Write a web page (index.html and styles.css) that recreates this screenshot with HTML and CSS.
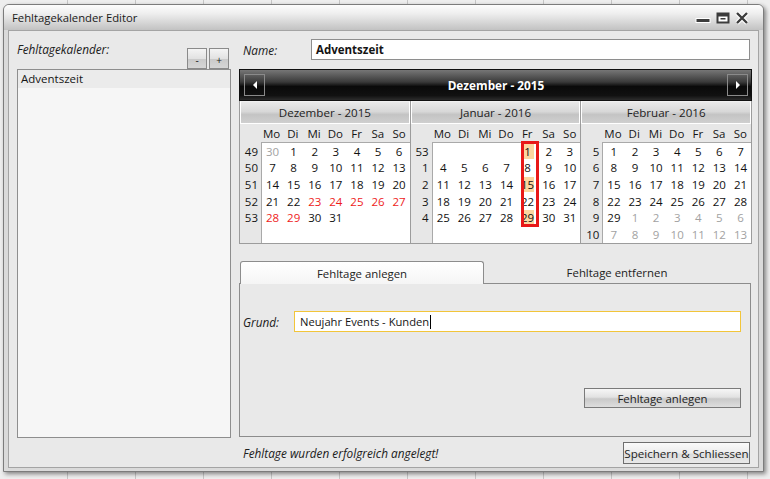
FILE: index.html
```html
<!DOCTYPE html>
<html lang="de">
<head>
<meta charset="utf-8">
<title>Fehltagekalender Editor</title>
<link rel="stylesheet" href="styles.css">
</head>
<body>
<div class="window">
  <div class="titlebar">
    <span class="title">Fehltagekalender Editor</span>
    <div class="controls">
      <span class="ctl ctl-min"><svg width="18" height="14" viewBox="0 0 18 14"><rect x="2" y="7.5" width="14" height="4" fill="#3c3c3c" stroke="#ffffff" stroke-width="1"/></svg></span>
      <span class="ctl"><svg width="14" height="14" viewBox="0 0 14 14"><rect x="1.5" y="2.5" width="11" height="9" fill="#ffffff" stroke="#3c3c3c" stroke-width="2"/><rect x="2" y="3" width="10" height="2.5" fill="#3c3c3c"/><rect x="4.5" y="7" width="5" height="1.5" fill="#3c3c3c"/></svg></span>
      <span class="ctl"><svg width="16" height="14" viewBox="0 0 16 14"><path d="M3 2 L13 12 M13 2 L3 12" stroke="#ffffff" stroke-width="4.5"/><path d="M3 2 L13 12 M13 2 L3 12" stroke="#3c3c3c" stroke-width="2.4"/></svg></span>
    </div>
  </div>
  <div class="client">
    <div class="left">
      <div class="left-head">
        <span class="label">Fehltagekalender:</span>
        <div class="pm">
          <button class="small-btn">-</button>
          <button class="small-btn">+</button>
        </div>
      </div>
      <div class="list">
        <div class="list-item">Adventszeit</div>
      </div>
    </div>
    <div class="right">
      <div class="name-row">
        <span class="label name-label">Name:</span>
        <div class="name-input">Adventszeit</div>
      </div>
      <div class="calendar">
        <div class="cal-head">
          <span class="nav"><svg width="6" height="8" viewBox="0 0 6 8"><path d="M5 0 L1 4 L5 8 Z" fill="#ffffff"/></svg></span>
          <span class="cal-title">Dezember - 2015</span>
          <span class="nav"><svg width="6" height="8" viewBox="0 0 6 8"><path d="M1 0 L5 4 L1 8 Z" fill="#ffffff"/></svg></span>
        </div>
        <div class="months">
          <div class="month">
            <div class="month-head">Dezember - 2015</div>
            <div class="month-body">
              <div class="corner"></div>
              <div class="dow"><span>Mo</span><span>Di</span><span>Mi</span><span>Do</span><span>Fr</span><span>Sa</span><span>So</span></div>
              <div class="weeks"><span>49</span><span>50</span><span>51</span><span>52</span><span>53</span><span></span></div>
              <div class="days">
                <span class="other">30</span><span>1</span><span>2</span><span>3</span><span>4</span><span>5</span><span>6</span>
                <span>7</span><span>8</span><span>9</span><span>10</span><span>11</span><span>12</span><span>13</span>
                <span>14</span><span>15</span><span>16</span><span>17</span><span>18</span><span>19</span><span>20</span>
                <span>21</span><span>22</span><span class="red">23</span><span class="red">24</span><span class="red">25</span><span class="red">26</span><span class="red">27</span>
                <span class="red">28</span><span class="red">29</span><span>30</span><span>31</span><span></span><span></span><span></span>
              </div>
            </div>
          </div>
          <div class="month">
            <div class="month-head">Januar - 2016</div>
            <div class="month-body">
              <div class="corner"></div>
              <div class="dow"><span>Mo</span><span>Di</span><span>Mi</span><span>Do</span><span>Fr</span><span>Sa</span><span>So</span></div>
              <div class="weeks"><span>53</span><span>1</span><span>2</span><span>3</span><span>4</span><span></span></div>
              <div class="days">
                <span></span><span></span><span></span><span></span><span class="sel">1</span><span>2</span><span>3</span>
                <span>4</span><span>5</span><span>6</span><span>7</span><span>8</span><span>9</span><span>10</span>
                <span>11</span><span>12</span><span>13</span><span>14</span><span class="sel">15</span><span>16</span><span>17</span>
                <span>18</span><span>19</span><span>20</span><span>21</span><span>22</span><span>23</span><span>24</span>
                <span>25</span><span>26</span><span>27</span><span>28</span><span class="sel">29</span><span>30</span><span>31</span>
                <div class="mark"></div>
              </div>
            </div>
          </div>
          <div class="month">
            <div class="month-head">Februar - 2016</div>
            <div class="month-body">
              <div class="corner"></div>
              <div class="dow"><span>Mo</span><span>Di</span><span>Mi</span><span>Do</span><span>Fr</span><span>Sa</span><span>So</span></div>
              <div class="weeks"><span>5</span><span>6</span><span>7</span><span>8</span><span>9</span><span>10</span></div>
              <div class="days">
                <span>1</span><span>2</span><span>3</span><span>4</span><span>5</span><span>6</span><span>7</span>
                <span>8</span><span>9</span><span>10</span><span>11</span><span>12</span><span>13</span><span>14</span>
                <span>15</span><span>16</span><span>17</span><span>18</span><span>19</span><span>20</span><span>21</span>
                <span>22</span><span>23</span><span>24</span><span>25</span><span>26</span><span>27</span><span>28</span>
                <span>29</span><span class="other">1</span><span class="other">2</span><span class="other">3</span><span class="other">4</span><span class="other">5</span><span class="other">6</span>
                <span class="other">7</span><span class="other">8</span><span class="other">9</span><span class="other">10</span><span class="other">11</span><span class="other">12</span><span class="other">13</span>
              </div>
            </div>
          </div>
        </div>
      </div>
      <div class="tabs">
        <div class="tab-strip">
          <div class="tab active">Fehltage anlegen</div>
          <div class="tab">Fehltage entfernen</div>
        </div>
        <div class="tab-panel">
          <div class="grund-row">
            <span class="label grund-label">Grund:</span>
            <div class="grund-input">Neujahr Events - Kunden<span class="caret"></span></div>
          </div>
          <div class="action-row">
            <button class="btn btn-add">Fehltage anlegen</button>
          </div>
        </div>
      </div>
      <div class="bottom-row">
        <span class="label status">Fehltage wurden erfolgreich angelegt!</span>
        <button class="btn btn-save">Speichern &amp; Schliessen</button>
      </div>
    </div>
  </div>
</div>
</body>
</html>
```
FILE: styles.css
```css
* { box-sizing: border-box; }
html, body { margin: 0; padding: 0; }
body {
  width: 770px;
  height: 479px;
  overflow: hidden;
  font-family: "Open Sans", "Noto Sans", sans-serif;
  font-size: 11.5px;
  color: #151515;
  background: #eeeeee repeating-linear-gradient(90deg, transparent 0 67px, #c6c6c6 67px 68px);
}
.window {
  margin: 4px 0 0 3px;
  width: 761px;
  height: 468px;
  border: 1px solid #7c7c7c;
  border-radius: 6px 6px 0 0;
  background: #dadada;
  box-shadow: 2px 2px 4px rgba(0, 0, 0, 0.45);
  display: flex;
  flex-direction: column;
}
.titlebar {
  height: 25px;
  flex: none;
  display: flex;
  align-items: center;
  padding-left: 8px;
  padding-right: 13px;
  background: linear-gradient(#fdfdfd, #eeeeee 35%, #c2c2c2);
  border-radius: 5px 5px 0 0;
}
.title { font-size: 11.3px; color: #1a1a1a; }
.controls { margin-left: auto; display: flex; align-items: center; gap: 4px; }
.ctl { display: flex; }
.ctl svg { display: block; }

.client {
  flex: 1;
  margin: 0 4px 3px 4px;
  border: 1px solid #a4a4a4;
  background: #e9e9e9;
  padding: 8px 5px 0 8px;
  display: flex;
  gap: 8px;
}
.label { font-style: italic; color: #202020; font-size: 11.8px; }

.left { width: 214px; display: flex; flex-direction: column; }
.left-head { height: 30px; display: flex; align-items: flex-start; }
.left-head .label { padding-top: 2px; }
.pm { margin-left: auto; margin-right: 2px; margin-top: 9px; display: flex; gap: 2px; }
.small-btn {
  width: 20px;
  height: 21px;
  padding: 0;
  border: 1px solid #8a8a8a;
  background: linear-gradient(#f4f4f4, #e2e2e2 50%, #cacaca 55%, #d6d6d6);
  font-family: inherit;
  font-size: 10px;
  color: #222;
  line-height: 16px;
  padding-top: 3px;
}
.list { height: 369px; border: 1px solid #8e8e8e; background: #f6f6f6; }
.list-item { height: 18px; line-height: 18px; padding-left: 3px; background: #ebebeb; font-size: 11.5px; }

.right { width: 513px; display: flex; flex-direction: column; }
.name-row { height: 21px; display: flex; align-items: center; }
.name-label { width: 72px; padding-left: 4px; }
.name-input {
  width: 439px;
  height: 21px;
  border: 1px solid #8e8e8e;
  background: #ffffff;
  font-weight: bold;
  font-size: 11.5px;
  line-height: 19px;
  padding-left: 4px;
}

.calendar { margin-top: 9px; }
.cal-head {
  height: 32px;
  border: 1px solid #101010;
  background: linear-gradient(#767676, #3a3a3a 40%, #0a0a0a 55%, #111111 85%, #2c2c2c);
  display: flex;
  align-items: center;
  justify-content: space-between;
  padding: 0 3px 0 4px;
}
.nav {
  width: 21px;
  height: 22px;
  border: 1px solid #8a8a8a;
  display: flex;
  align-items: center;
  justify-content: center;
}
.cal-title { color: #ffffff; font-weight: bold; font-size: 11.8px; }
.months { height: 143px; display: flex; border: 1px solid #9c9c9c; border-top: none; }
.month { flex: 1; display: flex; flex-direction: column; }
.month + .month { border-left: 1px solid #9c9c9c; }
.month-head {
  height: 23px;
  display: flex;
  align-items: center;
  justify-content: center;
  border: 1px solid #ffffff;
  border-top-color: #f0f0f0;
  background: linear-gradient(#e9e9e9, #d8d8d8 45%, #c4c4c4 60%, #cfcfcf);
  color: #222;
  font-size: 11.6px;
}
.month-body {
  flex: 1;
  display: grid;
  grid-template-columns: 21px 1fr;
  grid-template-rows: 18px 1fr;
  background: #e7e7e7;
}
.dow { display: grid; grid-template-columns: repeat(7, 1fr); align-items: center; text-align: center; }
.weeks {
  display: grid;
  grid-template-rows: repeat(6, 16.66px);
  padding-top: 1px;
  text-align: right;
  padding-right: 3px;
  align-items: center;
}
.days {
  position: relative;
  background: #ffffff;
  border-left: 1px solid #a9a9a9;
  border-top: 1px solid #a9a9a9;
  display: grid;
  grid-template-columns: repeat(7, 1fr);
  grid-template-rows: repeat(6, 16.66px);
  align-items: center;
  text-align: center;
  color: #111111;
}
.days span { line-height: 15px; }
.days .other { color: #a2a2a2; }
.days .red { color: #ee1c1c; }
.days .sel { background: #fbd6a0; margin: 0 4px; }
.mark {
  position: absolute;
  left: 88px;
  top: -2px;
  width: 18px;
  height: 86px;
  border: 3px solid #e81818;
}

.tabs { margin-top: 17px; }
.tab-strip { height: 22px; display: flex; padding-left: 1px; }
.tab {
  width: 244px;
  height: 22px;
  display: flex;
  align-items: center;
  justify-content: center;
  color: #222;
  font-size: 11.4px;
}
.tab + .tab { flex: 1; padding-right: 2px; }
.tab.active {
  border: 1px solid #8c8c8c;
  border-bottom: none;
  border-radius: 3px 3px 0 0;
  background: linear-gradient(#ffffff, #f5f5f5);
  position: relative;
  z-index: 1;
  height: 23px;
}
.tab-panel {
  height: 154px;
  width: 512px;
  border: 1px solid #8c8c8c;
  padding: 27px 9px 0 3px;
}
.grund-row { display: flex; align-items: center; height: 21px; }
.grund-label { width: 51px; }
.grund-input {
  width: 447px;
  height: 21px;
  border: 1px solid #f2c53a;
  background: #ffffff;
  padding-left: 5px;
  line-height: 19px;
  font-size: 11.2px;
  display: flex;
  align-items: center;
}
.caret { display: inline-block; width: 1px; height: 14px; background: #000; margin-left: 1px; }
.action-row { display: flex; justify-content: flex-end; margin-top: 56px; }
.btn {
  font-family: inherit;
  font-size: 11.4px;
  color: #1e1e1e;
  border: 1px solid #7a7a7a;
  background: linear-gradient(#f6f6f6, #e2e2e2 45%, #c9c9c9 55%, #dedede);
  padding: 0;
}
.btn-add { width: 157px; height: 20px; }
.bottom-row { margin-top: 5px; height: 22px; display: flex; align-items: center; }
.status { padding-left: 4px; }
.btn-save {
  margin-left: auto;
  margin-right: 2px;
  width: 127px;
  height: 22px;
  font-size: 11.6px;
  background: linear-gradient(#fafafa, #ececec 50%, #dcdcdc 55%, #e8e8e8);
  border-color: #6e6e6e;
}
```
